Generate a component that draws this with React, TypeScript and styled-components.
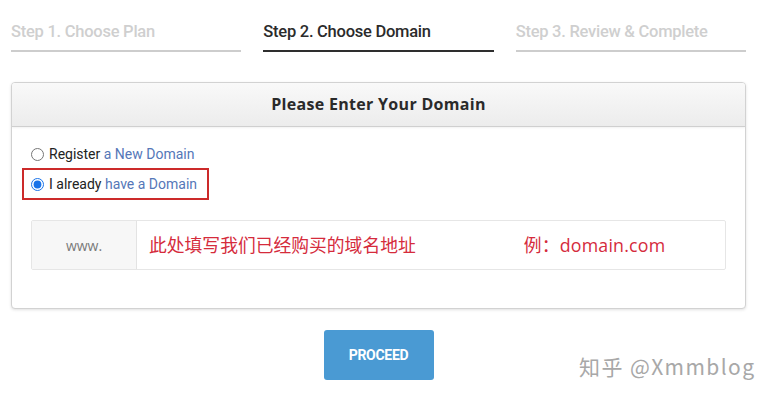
import React from "react";
import styled, { createGlobalStyle } from "styled-components";

const Global = createGlobalStyle`
  html, body { margin: 0; padding: 0; background: #fff; }
  body { font-family: Roboto, "Noto Sans", sans-serif; }
  * { box-sizing: border-box; }
`;

const Page = styled.div`
  position: relative;
  width: 775px;
  height: 400px;
  overflow: hidden;
  padding: 19px 29px 0 11px;
`;

const Steps = styled.div`
  display: grid;
  grid-template-columns: repeat(3, 1fr);
  column-gap: 22px;
`;

const Step = styled.div<{ $active?: boolean }>`
  font-family: Roboto, sans-serif;
  font-weight: 500;
  font-size: 16.5px;
  letter-spacing: -0.25px;
  line-height: 26px;
  padding-bottom: 5px;
  color: ${(p) => (p.$active ? "#2b2b2b" : "#cfcfcf")};
  border-bottom: 2px solid ${(p) => (p.$active ? "#2e2e2e" : "#cdcdcd")};
`;

const Card = styled.div`
  margin-top: 30px;
  border: 1px solid #d2d2d2;
  border-radius: 4px;
  box-shadow: 0 1px 3px rgba(0, 0, 0, 0.12);
  background: #fff;
  height: 227px;
  overflow: hidden;
`;

const CardHeader = styled.div`
  height: 44px;
  display: flex;
  align-items: center;
  justify-content: center;
  padding-bottom: 2px;
  background: linear-gradient(#f9f9f9, #ececec);
  border-bottom: 1px solid #cfcfcf;
  box-shadow: 0 1px 2px rgba(0, 0, 0, 0.06);
  font-family: "Open Sans", sans-serif;
  font-weight: 700;
  font-size: 16px;
  letter-spacing: 0.3px;
  color: #2a2a2a;
`;

const CardBody = styled.div`
  padding: 13px 19px 0 8px;
`;

const Options = styled.div`
  display: flex;
  flex-direction: column;
  align-items: flex-start;
`;

const OptionLabel = styled.label<{ $boxed?: boolean }>`
  display: flex;
  align-items: center;
  gap: 4px;
  white-space: nowrap;
  font-family: Roboto, sans-serif;
  font-size: 14px;
  color: #222;
  height: ${(p) => (p.$boxed ? "32px" : "28px")};
  padding: 0 ${(p) => (p.$boxed ? "7px" : "9px")};
  border: ${(p) => (p.$boxed ? "2px solid #cc2a2a" : "none")};
  margin-left: 2px;
  width: ${(p) => (p.$boxed ? "187px" : "auto")};
  cursor: pointer;
`;

const Radio = styled.input`
  width: 13px;
  height: 13px;
  margin: 0 1px 0 0;
  flex: none;
  accent-color: #1a73e8;
`;

const LinkText = styled.span`
  color: #5577b8;
`;

const InputGroup = styled.div`
  margin-top: 20px;
  margin-left: 11px;
  display: flex;
  height: 50px;
  border: 1px solid #e6e6e6;
  border-radius: 2px;
`;

const Prefix = styled.div`
  width: 105px;
  flex: none;
  display: flex;
  align-items: center;
  justify-content: center;
  background: #f7f7f7;
  border-right: 1px solid #e3e3e3;
  color: #7a7a7a;
  font-family: "Open Sans", sans-serif;
  font-size: 14px;
`;

const Field = styled.div`
  flex: 1;
  display: flex;
  align-items: center;
  padding-left: 12px;
  padding-bottom: 3px;
  color: #d52b3c;
  font-family: "Open Sans", "Noto Sans CJK SC", sans-serif;
  font-size: 17.8px;
`;

const Hint = styled.span`
  margin-left: 108px;
  letter-spacing: 0.2px;
`;

const Actions = styled.div`
  display: flex;
  justify-content: center;
  margin-top: 21px;
`;

const Button = styled.button`
  width: 110px;
  height: 50px;
  border: none;
  border-radius: 3px;
  background: #4a9ad3;
  color: #fff;
  font-family: Roboto, sans-serif;
  font-weight: 700;
  font-size: 14px;
  letter-spacing: -0.3px;
  padding-bottom: 2px;
  cursor: pointer;
`;

const Watermark = styled.div`
  position: absolute;
  left: 579px;
  top: 351px;
  font-family: "Noto Sans CJK SC", "Open Sans", sans-serif;
  font-size: 21px;
  color: #a8a8a8;
  letter-spacing: 1.4px;
`;

export default function App() {
  return (
    <Page>
      <Global />
      <Steps>
        <Step>Step 1. Choose Plan</Step>
        <Step $active>Step 2. Choose Domain</Step>
        <Step>Step 3. Review &amp; Complete</Step>
      </Steps>
      <Card>
        <CardHeader>Please Enter Your Domain</CardHeader>
        <CardBody>
          <Options>
            <OptionLabel>
              <Radio type="radio" name="domain" />
              <span>
                Register <LinkText>a New Domain</LinkText>
              </span>
            </OptionLabel>
            <OptionLabel $boxed>
              <Radio type="radio" name="domain" defaultChecked />
              <span>
                I already <LinkText>have a Domain</LinkText>
              </span>
            </OptionLabel>
          </Options>
          <InputGroup>
            <Prefix>www.</Prefix>
            <Field>
              此处填写我们已经购买的域名地址
              <Hint>例：domain.com</Hint>
            </Field>
          </InputGroup>
        </CardBody>
      </Card>
      <Actions>
        <Button>PROCEED</Button>
      </Actions>
      <Watermark>知乎 @Xmmblog</Watermark>
    </Page>
  );
}
